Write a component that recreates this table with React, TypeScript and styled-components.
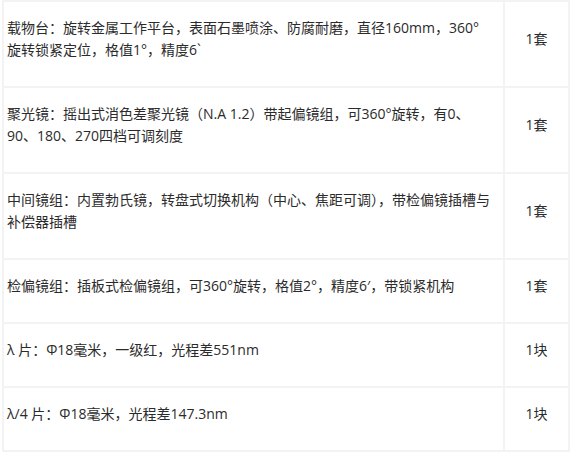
import React from "react"
import styled, { createGlobalStyle } from 'styled-components'

const GlobalStyle = createGlobalStyle`
body {
  margin: 0;
  background: #fff;
}
`

const Page = styled.div`
  padding: 0 0 0 2px;
`

const Table = styled.table`
  width: 568px;
  border-collapse: collapse;
  font-family: "Open Sans", "Noto Sans CJK SC", sans-serif;
  font-size: 14px;
  line-height: 22px;
  color: #2b2b2b;
`

const Cell = styled.td`
  border: 2px solid #f3f3f3;
  vertical-align: middle;
  padding: 15px 3px 25px 3px;
  white-space: nowrap;
`

const QtyCell = styled(Cell)`
  width: 63px;
  text-align: center;
  padding-left: 0;
  padding-right: 0;
`

type Item = { lines: string[]; qty: string }

const items: Item[] = [
  {
    lines: [
      '载物台：旋转金属工作平台，表面石墨喷涂、防腐耐磨，直径160mm，360°',
      '旋转锁紧定位，格值1°，精度6`',
    ],
    qty: '1套',
  },
  {
    lines: [
      '聚光镜：摇出式消色差聚光镜（N.A 1.2）带起偏镜组，可360°旋转，有0、',
      '90、180、270四档可调刻度',
    ],
    qty: '1套',
  },
  {
    lines: [
      '中间镜组：内置勃氏镜，转盘式切换机构（中心、焦距可调），带检偏镜插槽与',
      '补偿器插槽',
    ],
    qty: '1套',
  },
  {
    lines: ['检偏镜组：插板式检偏镜组，可360°旋转，格值2°，精度6′，带锁紧机构'],
    qty: '1套',
  },
  {
    lines: ['λ 片：Φ18毫米，一级红，光程差551nm'],
    qty: '1块',
  },
  {
    lines: ['λ/4 片：Φ18毫米，光程差147.3nm'],
    qty: '1块',
  },
]

const App = (): JSX.Element => (
  <Page>
    <GlobalStyle />
    <Table>
      <tbody>
        {items.map((item, i) => (
          <tr key={i}>
            <Cell>
              {item.lines.map((line, j) => (
                <React.Fragment key={j}>
                  {j > 0 && <br />}
                  {line}
                </React.Fragment>
              ))}
            </Cell>
            <QtyCell>{item.qty}</QtyCell>
          </tr>
        ))}
      </tbody>
    </Table>
  </Page>
)

export default App
